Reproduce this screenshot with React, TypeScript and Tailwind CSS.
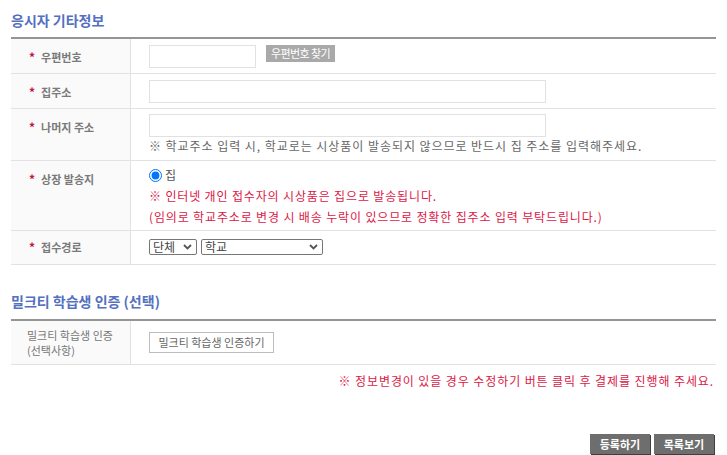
import React from 'react';

const font = { fontFamily: '"Noto Sans CJK KR", "Noto Sans", sans-serif' };

function Chevron() {
  return (
    <svg width="9" height="6" viewBox="0 0 9 6" className="shrink-0">
      <path d="M1 1l3.5 3.5L8 1" fill="none" stroke="#555" strokeWidth="1.8" />
    </svg>
  );
}

function Select({ value, width }: { value: string; width: string }) {
  return (
    <div
      className={`flex h-[16px] items-center justify-between rounded-[2px] border border-[#767676] pl-[3px] pr-[4px] text-[12px] leading-none text-[#444] ${width}`}
    >
      <span>{value}</span>
      <Chevron />
    </div>
  );
}

function Label({ children, top = 'pt-[10px]' }: { children: React.ReactNode; top?: string }) {
  return (
    <div
      className={`flex w-[120px] shrink-0 items-start gap-[6px] border-r border-[#e2e2e2] bg-[#fafafa] pl-[18px] ${top} text-[11px] font-bold leading-[16px] text-[#7a7a7a]`}
    >
      <span className="text-[12px] text-[#c8103e]">*</span>
      <span>{children}</span>
    </div>
  );
}

export default function App() {
  return (
    <div className="min-h-[455px] bg-white px-[11px] pt-[10px]" style={font}>
      {/* Section 1 */}
      <h2 className="text-[14px] font-bold leading-[20px] text-[#5470c0]">응시자 기타정보</h2>
      <div className="mt-[7px] w-[705px] border-t-2 border-[#959595]">
        {/* 우편번호 */}
        <div className="flex h-[35px] border-b border-[#e2e2e2]">
          <Label>우편번호</Label>
          <div className="flex items-start gap-[10px] pl-[18px] pt-[6px]">
            <div className="h-[23px] w-[107px] border border-[#e1e1e1]" />
            <button className="h-[17px] w-[69px] whitespace-nowrap bg-[#a9a9a9] px-0 text-[11px] leading-none tracking-[-0.6px] text-white">
              우편번호 찾기
            </button>
          </div>
        </div>

        {/* 집주소 */}
        <div className="flex h-[35px] border-b border-[#e2e2e2]">
          <Label>집주소</Label>
          <div className="pl-[18px] pt-[6px]">
            <div className="h-[23px] w-[397px] border border-[#e1e1e1]" />
          </div>
        </div>

        {/* 나머지 주소 */}
        <div className="flex h-[52px] border-b border-[#e2e2e2]">
          <Label>나머지 주소</Label>
          <div className="pl-[18px] pt-[5px]">
            <div className="h-[23px] w-[397px] border border-[#e1e1e1]" />
            <p className="mt-[1px] whitespace-nowrap text-[12px] leading-[16px] tracking-[0.95px] text-[#666]">
              ※ 학교주소 입력 시, 학교로는 시상품이 발송되지 않으므로 반드시 집 주소를 입력해주세요.
            </p>
          </div>
        </div>

        {/* 상장 발송지 */}
        <div className="flex h-[70px] border-b border-[#e2e2e2]">
          <Label>상장 발송지</Label>
          <div className="pl-[18px] pt-[7px]">
            <label className="flex items-center gap-[3px] text-[12px] leading-[14px] text-[#555]">
              <input type="radio" defaultChecked className="m-0 h-[13px] w-[13px]" />
              <span>집</span>
            </label>
            <div className="mt-[3px] whitespace-nowrap text-[12px] leading-[21px] tracking-[0.85px] text-[#dc1846]">
              <p>※ 인터넷 개인 접수자의 시상품은 집으로 발송됩니다.</p>
              <p>(임의로 학교주소로 변경 시 배송 누락이 있으므로 정확한 집주소 입력 부탁드립니다.)</p>
            </div>
          </div>
        </div>

        {/* 접수경로 */}
        <div className="flex h-[34px] border-b border-[#e2e2e2]">
          <Label top="pt-[8px]">접수경로</Label>
          <div className="flex gap-[4px] pl-[18px] pt-[8px]">
            <Select value="단체" width="w-[48px]" />
            <Select value="학교" width="w-[122px]" />
          </div>
        </div>
      </div>

      {/* Section 2 */}
      <h2 className="mt-[26px] text-[14px] font-bold leading-[20px] text-[#5470c0]">
        밀크티 학습생 인증 (선택)
      </h2>
      <div className="mt-[8px] w-[705px] border-t-2 border-[#959595]">
        <div className="flex h-[44px] border-b border-[#e2e2e2]">
          <div className="flex w-[120px] shrink-0 flex-col justify-center border-r border-[#e2e2e2] bg-[#fafafa] pl-[16px] text-[11px] leading-[15px] text-[#777]">
            <span>밀크티 학습생 인증</span>
            <span>(선택사항)</span>
          </div>
          <div className="flex items-center pl-[18px]">
            <button className="h-[21px] w-[125px] border border-[#bdbdbd] bg-white text-[11px] leading-none text-[#666]">
              밀크티 학습생 인증하기
            </button>
          </div>
        </div>
      </div>

      <p className="mt-[8px] w-[703px] whitespace-nowrap text-right text-[12px] leading-[16px] tracking-[0.9px] text-[#dc1846]">
        ※ 정보변경이 있을 경우 수정하기 버튼 클릭 후 결제를 진행해 주세요.
      </p>

      {/* Buttons */}
      <div className="mt-[45px] flex w-[703px] justify-end gap-[4px]">
        <button className="h-[20px] w-[60px] bg-[#6e6e6e] text-[11px] font-bold leading-none text-white shadow-[1px_1px_0_#3f3f3f]">
          등록하기
        </button>
        <button className="h-[20px] w-[60px] bg-[#6e6e6e] text-[11px] font-bold leading-none text-white shadow-[1px_1px_0_#3f3f3f]">
          목록보기
        </button>
      </div>
    </div>
  );
}
